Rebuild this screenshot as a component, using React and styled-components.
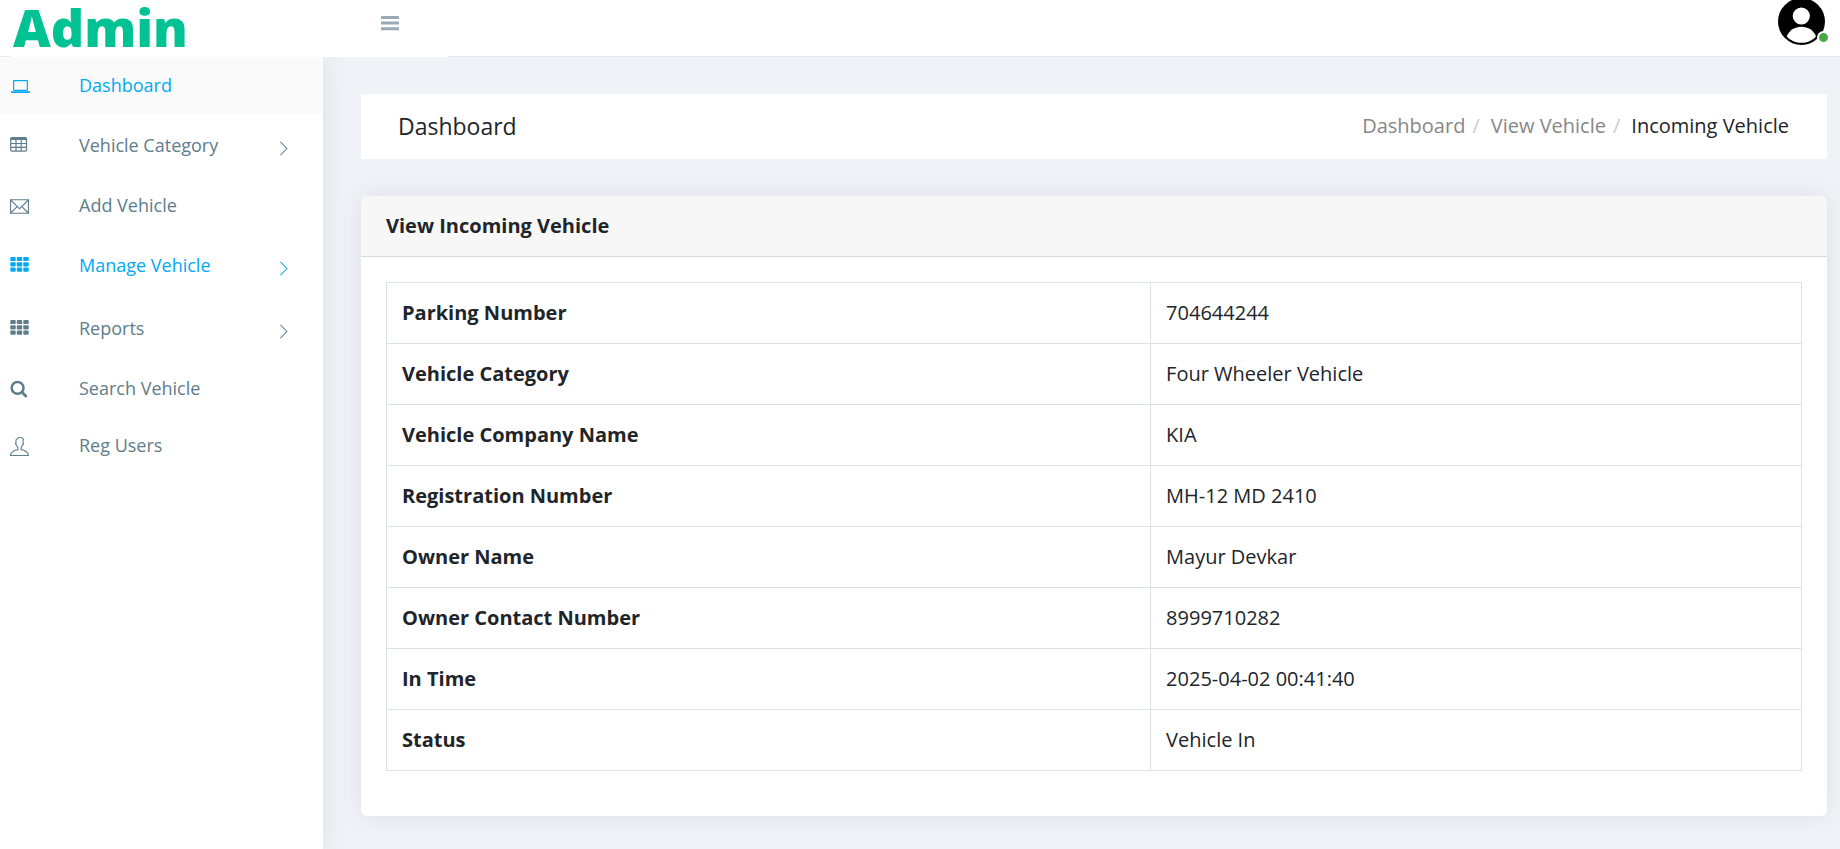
import React from "react";
import styled, { createGlobalStyle } from "styled-components";
import { TfiEmail, TfiUser, TfiAngleRight } from "react-icons/tfi";

const GlobalStyle = createGlobalStyle`
  *, *::before, *::after { box-sizing: border-box; }
  body {
    margin: 0;
    background: #f1f2f7;
    color: #212529;
    font-family: "Open Sans", "Noto Sans", sans-serif;
    font-size: 20px;
    line-height: 30px;
  }
  a { color: inherit; text-decoration: none; }
  ul, ol { list-style: none; margin: 0; padding: 0; }
`;

const Page = styled.div`
  display: flex;
  flex-direction: column;
  min-height: 100vh;
`;

const Header = styled.header`
  position: relative;
  z-index: 2;
  display: flex;
  height: 57px;
  padding-left: 11px;
  background: #fff;
  border-bottom: 1px solid #e8e8ed;
`;

const BrandArea = styled.div`
  display: flex;
  align-items: flex-start;
  width: 437px;
  margin-bottom: -1px;
  padding-left: 2px;
  background: #fff;
`;

const Brand = styled.a`
  flex: 0 0 368px;
  color: #00c292;
  font-size: 52px;
  font-weight: 800;
  line-height: 54px;
`;

const MenuToggle = styled.button`
  display: block;
  margin-top: 16px;
  padding: 0;
  border: 0;
  background: none;
  color: #99abb4;
  line-height: 0;
  cursor: pointer;
`;

const UserButton = styled.button`
  position: relative;
  align-self: flex-start;
  margin: -2px 15px 0 auto;
  padding: 0;
  border: 0;
  background: none;
  line-height: 0;
  cursor: pointer;
`;

const OnlineDot = styled.span`
  position: absolute;
  right: -5px;
  bottom: 1px;
  width: 13px;
  height: 13px;
  border: 2px solid #fff;
  border-radius: 50%;
  background: #4ba748;
`;

const Body = styled.div`
  display: flex;
  flex: 1;
`;

const Sidebar = styled.nav`
  position: relative;
  flex: 0 0 323px;
  background: #fff;
  box-shadow: 1px 0 25px rgba(0, 0, 0, 0.08);
`;

const NavLink = styled.a`
  display: flex;
  align-items: center;
  height: ${(p) => (p.$submenu ? 63 : 57)}px;
  padding: 0 32px 2px 10px;
  background: ${(p) => (p.$current ? "#fafafa" : "transparent")};
  color: ${(p) => (p.$highlight ? "#03a9f3" : "#607d8b")};
  font-size: 18px;
`;

const NavIcon = styled.span`
  display: flex;
  flex: 0 0 69px;
  padding-top: ${(p) => (p.$submenu ? 1 : 3)}px;
`;

const NavArrow = styled.span`
  display: flex;
  margin-left: auto;
  padding-top: 7px;
`;

const Main = styled.main`
  flex: 1;
  min-width: 0;
  padding: 37px 13px 33px 38px;
`;

const TitleBar = styled.div`
  display: flex;
  align-items: center;
  justify-content: space-between;
  height: 65px;
  margin-bottom: 37px;
  padding: 0 38px 2px 37px;
  background: #fff;
`;

const PageTitle = styled.h1`
  margin: 0;
  font-size: 23px;
  font-weight: 400;
  line-height: 30px;
`;

const Crumbs = styled.ol`
  display: flex;

  li + li::before {
    content: "/";
    padding: 0 11px 0 7px;
    color: #ccc;
  }
`;

const Crumb = styled.li`
  color: ${(p) => (p.$current ? "#212529" : "#878787")};
`;

const Card = styled.section`
  background: #fff;
  border-radius: 6px;
  box-shadow: 0 0 25px rgba(0, 0, 0, 0.08);
`;

const CardTitle = styled.h2`
  margin: 0;
  padding: 15px 25px;
  border-bottom: 1px solid #d8d9da;
  border-radius: 6px 6px 0 0;
  background: #f7f7f7;
  font-size: 20px;
  font-weight: 700;
  line-height: 30px;
`;

const CardBody = styled.div`
  padding: 25px 25px 45px;
`;

const Table = styled.table`
  width: 100%;
  border-collapse: collapse;
  table-layout: fixed;
`;

const Label = styled.th`
  width: 54%;
  height: 61px;
  padding: 0 15px;
  border: 1px solid #dee2e6;
  font-weight: 700;
  text-align: left;
`;

const Value = styled.td`
  padding: 0 15px;
  border: 1px solid #dee2e6;
`;

const BarsIcon = () => (
  <svg width="18" height="15" viewBox="0 0 18 15" fill="currentColor" aria-hidden="true">
    <rect width="18" height="3" rx="0.5" />
    <rect y="5.6" width="18" height="3" rx="0.5" />
    <rect y="11.2" width="18" height="3" rx="0.5" />
  </svg>
);

const LaptopIcon = () => (
  <svg width="20" height="17" viewBox="0 0 20 17" aria-hidden="true">
    <rect x="3.6" y="2.6" width="13.8" height="9.8" rx="0.8" fill="none" stroke="currentColor" strokeWidth="1.2" />
    <path d="M1 13.2h19v1q0 .8-.8.8H1.8q-.8 0-.8-.8z" fill="currentColor" />
  </svg>
);

const TableIcon = () => (
  <svg width="19" height="17" viewBox="0 0 19 17" aria-hidden="true">
    <rect x="0.7" y="0.7" width="15.8" height="13.4" rx="1" fill="none" stroke="currentColor" strokeWidth="1.2" />
    <path d="M1 1h15v2H1z" fill="currentColor" />
    <path d="M1 6.5h15M1 10.3h15M6 2v12M11.2 2v12" fill="none" stroke="currentColor" strokeWidth="1.2" />
  </svg>
);

const GridIcon = () => (
  <svg width="19" height="17" viewBox="0 0 19 17" fill="currentColor" aria-hidden="true">
    {[0, 5.3, 10.6].map((y) =>
      [0.3, 6.8, 13.3].map((x) => (
        <rect key={`${x}-${y}`} x={x} y={y} width="5.4" height="4.1" rx="0.9" />
      ))
    )}
  </svg>
);

const SearchIcon = () => (
  <svg width="18" height="18" viewBox="0 0 18 18" fill="none" stroke="currentColor" aria-hidden="true">
    <circle cx="7.6" cy="7.9" r="5.9" strokeWidth="2.5" />
    <path d="M12 12.3l3.8 3.8" strokeWidth="2.8" strokeLinecap="round" />
  </svg>
);

const AvatarIcon = () => (
  <svg width="47" height="47" viewBox="0 0 47 47" aria-hidden="true">
    <circle cx="23.5" cy="23.5" r="23.5" fill="#000" />
    <circle cx="23.3" cy="18" r="8.6" fill="#fff" />
    <path d="M8.8 38.4C11 32.4 16.6 28.7 23.4 28.7S35.8 32.4 38 38.4C34.2 42.6 29 44.8 23.4 44.8S12.6 42.6 8.8 38.4z" fill="#fff" />
  </svg>
);

const navItems = [
  { label: "Dashboard", icon: <LaptopIcon />, current: true, highlight: true },
  { label: "Vehicle Category", icon: <TableIcon />, submenu: true },
  { label: "Add Vehicle", icon: <TfiEmail size={19} /> },
  { label: "Manage Vehicle", icon: <GridIcon />, submenu: true, highlight: true },
  { label: "Reports", icon: <GridIcon />, submenu: true },
  { label: "Search Vehicle", icon: <SearchIcon /> },
  { label: "Reg Users", icon: <TfiUser size={19} /> },
];

const details = [
  ["Parking Number", "704644244"],
  ["Vehicle Category", "Four Wheeler Vehicle"],
  ["Vehicle Company Name", "KIA"],
  ["Registration Number", "MH-12 MD 2410"],
  ["Owner Name", "Mayur Devkar"],
  ["Owner Contact Number", "8999710282"],
  ["In Time", "2025-04-02 00:41:40"],
  ["Status", "Vehicle In"],
];

export default function App() {
  return (
    <Page>
      <GlobalStyle />
      <Header>
        <BrandArea>
          <Brand href="#">Admin</Brand>
          <MenuToggle type="button" aria-label="Toggle menu">
            <BarsIcon />
          </MenuToggle>
        </BrandArea>
        <UserButton type="button" aria-label="User account">
          <AvatarIcon />
          <OnlineDot />
        </UserButton>
      </Header>
      <Body>
        <Sidebar aria-label="Main">
          <ul>
            {navItems.map((item) => (
              <li key={item.label}>
                <NavLink
                  href="#"
                  $submenu={item.submenu}
                  $current={item.current}
                  $highlight={item.highlight}
                >
                  <NavIcon $submenu={item.submenu}>{item.icon}</NavIcon>
                  {item.label}
                  {item.submenu && (
                    <NavArrow>
                      <TfiAngleRight size={15} />
                    </NavArrow>
                  )}
                </NavLink>
              </li>
            ))}
          </ul>
        </Sidebar>
        <Main>
          <TitleBar>
            <PageTitle>Dashboard</PageTitle>
            <nav aria-label="Breadcrumb">
              <Crumbs>
                <Crumb><a href="#">Dashboard</a></Crumb>
                <Crumb><a href="#">View Vehicle</a></Crumb>
                <Crumb $current aria-current="page">Incoming Vehicle</Crumb>
              </Crumbs>
            </nav>
          </TitleBar>
          <Card>
            <CardTitle>View Incoming Vehicle</CardTitle>
            <CardBody>
              <Table>
                <tbody>
                  {details.map(([label, value]) => (
                    <tr key={label}>
                      <Label scope="row">{label}</Label>
                      <Value>{value}</Value>
                    </tr>
                  ))}
                </tbody>
              </Table>
            </CardBody>
          </Card>
        </Main>
      </Body>
    </Page>
  );
}
